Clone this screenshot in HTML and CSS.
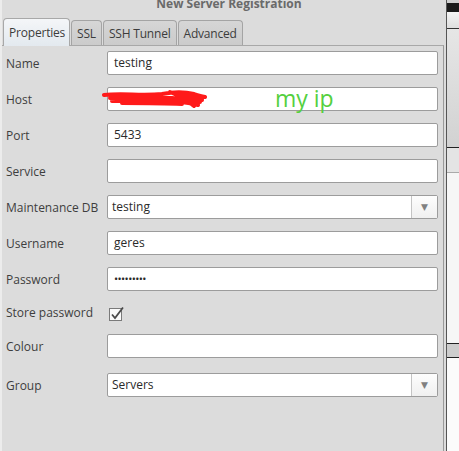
FILE: index.html
```html
<!DOCTYPE html>
<html>
<head>
<meta charset="utf-8">
<link rel="stylesheet" href="styles.css">
</head>
<body>
<div class="screen">
  <div class="dialog">
    <div class="title">New Server Registration</div>
    <div class="tabs">
      <div class="tab active">Properties</div>
      <div class="tab">SSL</div>
      <div class="tab">SSH Tunnel</div>
      <div class="tab">Advanced</div>
    </div>
    <div class="panel">
      <div class="row"><div class="label">Name</div><div class="field">testing</div></div>
      <div class="row"><div class="label">Host</div><div class="field host"><span class="myip">my ip</span>
        <svg class="scribble" width="110" height="22" viewBox="0 0 110 22"><path d="M2 7 C20 5 40 8 60 6 C70 4 80 3 92 6 C97 8 100 8 103 9 M8 10 C30 11 50 9 70 10 C80 11 92 10 100 12 M10 13 C30 13 50 13 70 13 C80 14 90 15 96 17 M20 15 C40 15 60 15 80 16 M68 4 C78 8 86 13 92 18 M74 6 L96 10 M80 12 L98 14" stroke="#ff1a1a" stroke-width="4" fill="none" stroke-linecap="round"/></svg>
      </div></div>
      <div class="row"><div class="label">Port</div><div class="field">5433</div></div>
      <div class="row"><div class="label">Service</div><div class="field"></div></div>
      <div class="row"><div class="label">Maintenance DB</div><div class="field combo"><span class="val">testing</span><span class="drop">▼</span></div></div>
      <div class="row"><div class="label">Username</div><div class="field">geres</div></div>
      <div class="row"><div class="label">Password</div><div class="field pw">•••••••••</div></div>
      <div class="row check-row"><div class="label">Store password</div>
        <div class="checkbox"><svg width="16" height="15" viewBox="0 0 16 15"><rect x="0.5" y="2.5" width="12" height="12" fill="#fafafa" stroke="#7a7a7a"/><path d="M3 8.5 L6 12 L14 1.5" stroke="#4a4a4a" stroke-width="1.8" fill="none"/></svg></div>
      </div>
      <div class="row"><div class="label">Colour</div><div class="field"></div></div>
      <div class="row group-row"><div class="label">Group</div><div class="field combo"><span class="val">Servers</span><span class="drop">▼</span></div></div>
    </div>
  </div>
  <div class="side">
    <div class="s1"></div>
    <div class="s2"></div>
    <div class="s3"></div>
    <div class="s4"></div>
    <div class="s5"></div>
    <div class="s6"></div>
    <div class="s7"></div>
  </div>
</div>
</body>
</html>
```

FILE: styles.css
```css
html, body {
  margin: 0;
  padding: 0;
  background: #dcdcdc;
}
.screen {
  width: 459px;
  height: 451px;
  display: flex;
  overflow: hidden;
  font-family: "Open Sans", "DejaVu Sans", sans-serif;
}
.dialog {
  width: 447px;
  background: #dcdcdc;
  border-left: 2px solid #ececec;
  box-sizing: border-box;
  display: flex;
  flex-direction: column;
  position: relative;
}
.title {
  height: 14px;
  margin-top: -2px;
  margin-bottom: 6px;
  text-align: center;
  font-weight: bold;
  font-size: 12px;
  line-height: 12px;
  color: #6a6a6a;
  padding-left: 10px;
  overflow: hidden;
}
.tabs {
  display: flex;
  align-items: flex-end;
  padding-left: 1px;
  height: 27px;
  position: relative;
  z-index: 1;
}
.tab {
  height: 25px;
  box-sizing: border-box;
  border: 1px solid #a4a4a4;
  border-bottom: none;
  border-radius: 4px 4px 0 0;
  background: linear-gradient(#d6d6d6, #cbcbcb);
  font-size: 12px;
  letter-spacing: -0.2px;
  color: #3c3c3c;
  padding: 4px 5px 0;
  margin-right: 1px;
}
.tab.active {
  background: linear-gradient(#f4f6f8, #e3e9ef);
  padding: 5px 4px 0 5px;
  height: 28px;
  margin-bottom: -1px;
  border-color: #a8a8a8;
}
.panel {
  flex: 1;
  border-top: 1px solid #a8a8a8;
  border-right: 1px solid #9a9a9a;
  margin-right: 2px;
  padding-top: 5px;
  display: flex;
  flex-direction: column;
  gap: 12px;
}
.row {
  display: flex;
  align-items: center;
  height: 24px;
}
.label {
  width: 101px;
  padding-left: 4px;
  font-size: 12px;
  color: #3e3e3e;
}
.field {
  width: 331px;
  height: 24px;
  box-sizing: border-box;
  background: #fff;
  border: 1px solid #9c9c9c;
  border-radius: 2px;
  font-size: 12px;
  color: #2a2a2a;
  padding-left: 6px;
  line-height: 22px;
  position: relative;
}
.myip {
  position: absolute;
  left: 167px;
  top: -5px;
  font-family: "Open Sans", sans-serif;
  font-size: 23px;
  line-height: 30px;
  color: #55d03f;
}
.scribble {
  position: absolute;
  left: -6px;
  top: 0px;
}
.pw {
  font-size: 11px;
  letter-spacing: -0.6px;
}
.combo {
  display: flex;
  padding-left: 0;
}
.combo .val {
  flex: 1;
  padding-left: 4px;
}
.combo .drop {
  width: 25px;
  border-left: 1px solid #c4c4c4;
  text-align: center;
  font-size: 9px;
  color: #808080;
  background: linear-gradient(#fdfdfd, #f0f0f0);
}
.check-row {
  height: 19px;
}
.checkbox {
  height: 15px;
  padding-left: 2px;
  margin-top: -3px;
}
.group-row {
  margin-top: 3px;
}
.side {
  width: 12px;
  border-left: 1px solid #555;
  display: flex;
  flex-direction: column;
  background: #fbfbfb;
}
.s1 { height: 3px; background: #cfcfcf; }
.s2 { height: 9px; background: #1a1a1a; }
.s3 { height: 16px; background: linear-gradient(#f4f4f4, #dedede); border-bottom: 1px solid #333; }
.s4 { height: 118px; background: linear-gradient(#e6e6e6, #d2d2d2); border-bottom: 1px solid #222; }
.s5 { height: 24px; background: #e4e4e4; border-bottom: 1px solid #aaa; }
.s6 { height: 170px; background: #f6f6f6; border-bottom: 1px solid #222; }
.s7 { height: 13px; background: #cdcdcd; border-bottom: 1px solid #222; }
```
